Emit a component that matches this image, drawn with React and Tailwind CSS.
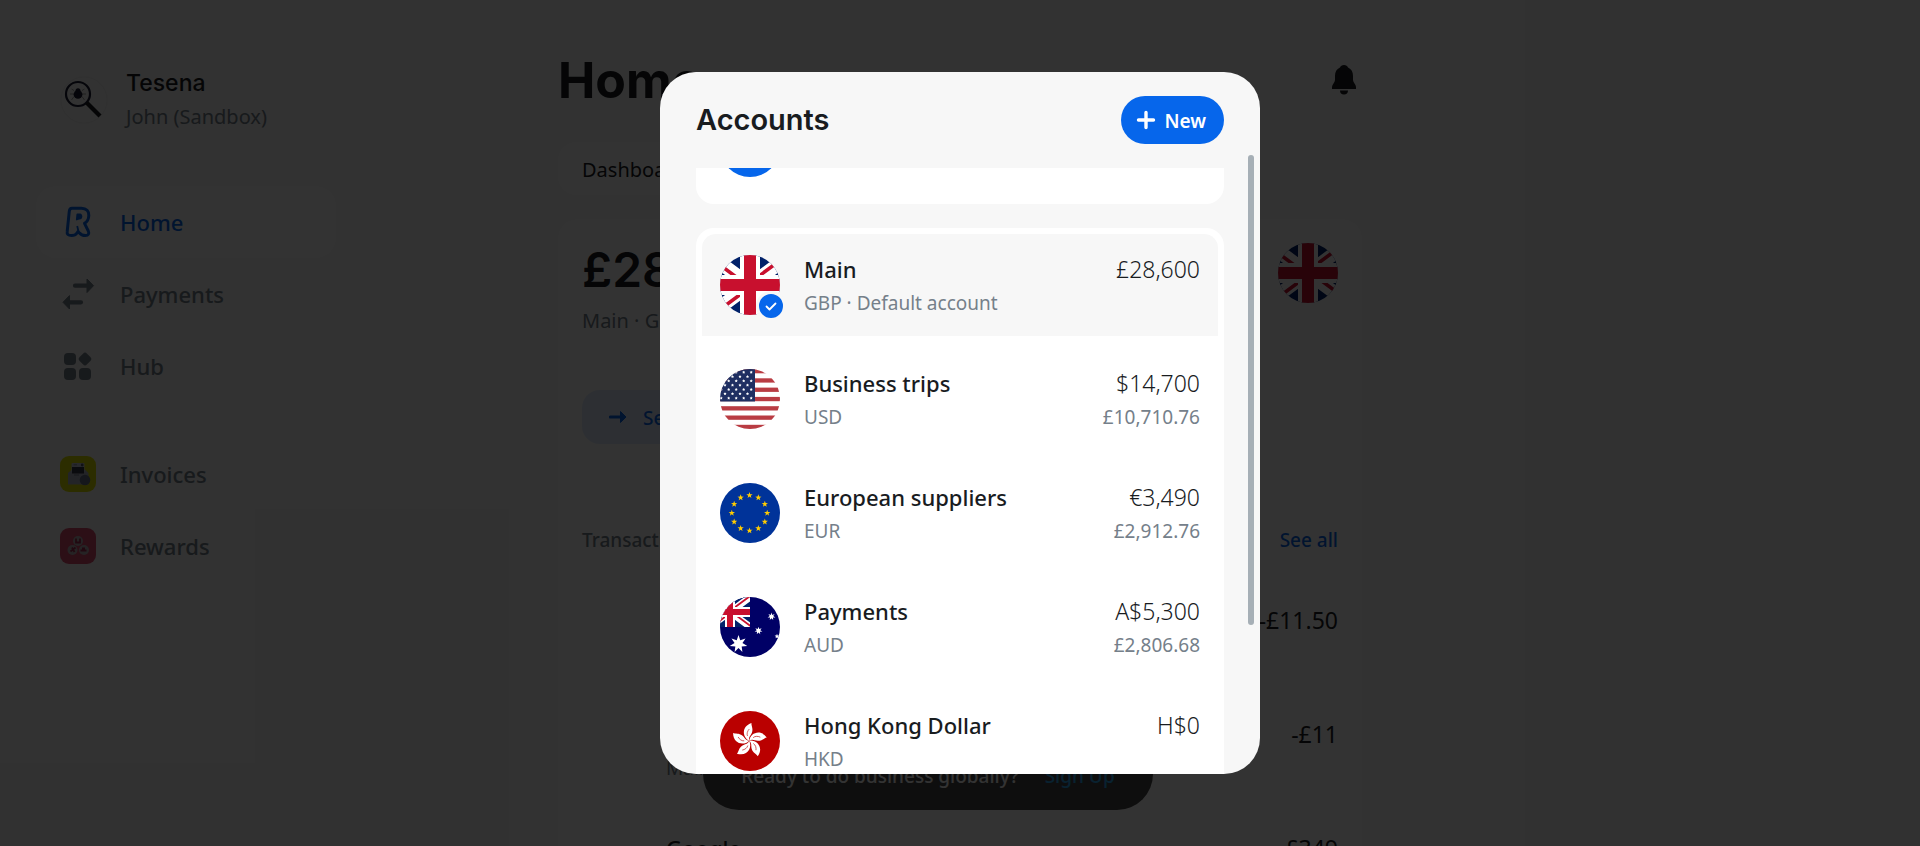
import React from "react";

function UnionJackArt() {
  return (
    <g>
      <rect x="-10" width="80" height="60" fill="#012169" />
      <path d="M-10 .4L70 59.6M70 .4L-10 59.6" stroke="#fff" strokeWidth="13.5" />
      <path
        d="M30 30L-10 .4V4.9L30 34.5ZM30 30L70 .4V-4.1L30 25.5ZM30 30L70 59.6V55.1L30 25.5ZM30 30L-10 59.6V64.1L30 34.5Z"
        fill="#c8102e"
      />
      <path d="M30 0V60M-10 30H70" stroke="#fff" strokeWidth="20" />
      <path d="M30 0V60M-10 30H70" stroke="#c8102e" strokeWidth="12" />
    </g>
  );
}

function star(cx, cy, r, points = 5, inner = 0.4) {
  const out = [];
  for (let i = 0; i < points * 2; i++) {
    const a = -Math.PI / 2 + (i * Math.PI) / points;
    const q = i % 2 ? r * inner : r;
    out.push(`${(cx + q * Math.cos(a)).toFixed(2)},${(cy + q * Math.sin(a)).toFixed(2)}`);
  }
  return out.join(" ");
}

function UsFlag() {
  const dots = [];
  for (let r = 0; r < 7; r++) {
    for (let c = 0; c < 5; c++) {
      dots.push([(r % 2 ? 5 : 1.2) + c * 7.5, 3.3 + r * 4.3]);
    }
  }
  return (
    <g>
      <rect width="60" height="60" fill="#fff" />
      {[0, 1, 2, 3, 4, 5, 6].map((i) => (
        <rect key={i} y={i * 9.3} width="60" height="4.3" fill="#b93c43" />
      ))}
      <rect width="35" height="32.5" fill="#1f2f62" />
      {dots.filter((d) => d[0] < 34).map((d, i) => (
        <polygon key={i} points={star(d[0], d[1], 1.6, 5, 0.55)} fill="#fff" />
      ))}
    </g>
  );
}

function EuFlag() {
  return (
    <g>
      <rect width="60" height="60" fill="#039" />
      {Array.from({ length: 12 }, (_, i) => (
        <polygon key={i} fill="#fc0" points={star(29.5 + 17.7 * Math.sin((i * Math.PI) / 6), 30 - 17.7 * Math.cos((i * Math.PI) / 6), 3.3)} />
      ))}
    </g>
  );
}

function AuFlag() {
  return (
    <g>
      <rect width="60" height="60" fill="#006" />
      <svg x="-10" y="0" width="40" height="30" viewBox="-10 0 80 60">
        <UnionJackArt />
      </svg>
      <polygon fill="#fff" points={star(18.5, 47, 9, 7, 0.45)} />
      <polygon fill="#fff" points={star(51.5, 19.5, 4, 7, 0.45)} />
      <polygon fill="#fff" points={star(38.5, 33.7, 4, 7, 0.45)} />
      <polygon fill="#fff" points={star(57, 39.3, 2.5, 5, 0.45)} />
    </g>
  );
}

function HkFlag() {
  return (
    <g>
      <rect width="60" height="60" fill="#ba0000" />
      {[0, 72, 144, 216, 288].map((a) => (
        <g key={a} transform={`rotate(${a} 29.2 29.7)`}>
          <path d="M29.200 29.700C22.500 26.500 21 15.500 31.500 12C31 14.500 33.500 17.500 32 21.500C31 24.500 28.200 26 29.200 29.700Z" fill="#fff" />
          <path d="M27.500 25C26.500 22.500 27.500 20 29.300 18" fill="none" stroke="#ba0000" strokeWidth=".6" />
        </g>
      ))}
    </g>
  );
}

const FLAGS = { GBP: UnionJackArt, USD: UsFlag, EUR: EuFlag, AUD: AuFlag, HKD: HkFlag };

function Flag({ code }) {
  const Art = FLAGS[code];
  return (
    <svg viewBox="0 0 60 60" className="size-[60px] shrink-0 rounded-full" aria-hidden="true">
      <Art />
    </svg>
  );
}

function AvatarIcon() {
  return (
    <svg viewBox="0 0 48 48" className="size-12 shrink-0" aria-hidden="true">
      <circle cx="24" cy="24" r="23" fill="#fbfbfb" stroke="#eee" />
      <circle cx="18" cy="18" r="12" fill="none" stroke="#191c33" strokeWidth="2.200" />
      <path d="M26.500 26.500L40 40" stroke="#191c1f" strokeWidth="4.200" />
      <path d="M14 14.500L11.500 13M14 18H10M14 20.500L11.500 24M22 14.500L24.500 13M22 18H26M22 20.500L24.500 24" stroke="#888" strokeWidth=".8" fill="none" />
      <ellipse cx="18" cy="18.500" rx="4.400" ry="4.300" fill="#191c33" />
      <circle cx="18" cy="14.700" r="2.500" fill="#191c33" />
    </svg>
  );
}

function HomeIcon() {
  return (
    <svg viewBox="0 0 36 36" className="size-9" fill="none" stroke="#0666eb" strokeWidth="3" strokeLinejoin="round" aria-hidden="true">
      <path d="M12 4.200H21.500C26.500 4.200 29 7.200 28.800 11.500C28.700 15 27 18 24.500 19.400L28.300 27C29.500 29.700 28.300 31.500 25.500 31.500C22.500 31.500 21 31 19.500 29L18 27.500L17 29C15.500 31.200 14.500 31.500 11.500 31.500C8 31.500 6.800 30.200 7.200 27.500L9.300 7.200C9.500 5.200 10.500 4.200 12 4.200Z" />
      <path d="M17.300 10.500H20C22 10.500 22 14.500 19.500 14.500L16.800 15.500ZM17.200 22L18.500 27.500" strokeWidth="1.800" fill="#0666eb" />
    </svg>
  );
}

function PaymentsIcon() {
  return (
    <svg viewBox="0 0 36 36" className="size-9" aria-hidden="true">
      <path d="M15 9.700H28M21 26.300H8" stroke="#75808a" strokeWidth="4.200" strokeLinecap="round" />
      <path d="M27 3L33.500 9.700L27 16.500ZM9.500 19.600L3 26.300L9.500 33Z" fill="#75808a" stroke="#75808a" strokeLinejoin="round" />
    </svg>
  );
}

function HubIcon() {
  return (
    <svg viewBox="0 0 36 36" className="size-9" fill="#75808a" aria-hidden="true">
      <rect x="4" y="5" width="12" height="12" rx="4" />
      <rect x="4" y="20" width="12" height="12" rx="4" />
      <rect x="19" y="20" width="12" height="12" rx="4" />
      <rect x="19.800" y="5.800" width="10.400" height="10.400" rx="2.500" transform="rotate(45 25 11)" />
    </svg>
  );
}

function InvoicesIcon() {
  return (
    <svg viewBox="0 0 36 36" className="size-9" aria-hidden="true">
      <rect width="36" height="36" rx="9" fill="#dde200" />
      <path d="M8 17L12 13.500H25L28.500 17V28.500H8Z" fill="#b0b5c2" />
      <rect x="11.500" y="7" width="13" height="9" rx="1" fill="#c9cdd8" />
      <path d="M13.500 8.800H17" stroke="#8a90a0" />
      <circle cx="22.200" cy="9" r="1.400" fill="#55596a" />
      <rect x="12" y="11" width="12" height="6.500" fill="#343947" />
      <path d="M14 19H19" stroke="#717889" />
      <circle cx="25" cy="24" r="5.300" fill="#6a748c" />
    </svg>
  );
}

function RewardsIcon() {
  return (
    <svg viewBox="0 0 36 36" className="size-9" aria-hidden="true">
      <rect width="36" height="36" rx="9" fill="#d94c70" />
      <g fill="#b9afb6">
        <circle cx="18" cy="13" r="5" />
        <circle cx="12.500" cy="22" r="5" />
        <circle cx="24" cy="22" r="5" />
      </g>
      <path d="M16 10.500V14.500H20V10.500M10.500 23.500L15.500 19.500M12 19.500L14.500 24M20.500 22.500H26.500M22 20.500H25" stroke="#a32b52" strokeWidth="1.800" fill="none" />
    </svg>
  );
}

function BellIcon() {
  return (
    <svg viewBox="0 0 24 30" className="h-[30px] w-6" fill="#191c1f" aria-hidden="true">
      <path d="M12 0C14 0 15.500 1 16 2.500C19.500 4 21 7 21 11V15C21 17.500 24 19.500 24 22V24H0V22C0 19.500 3 17.500 3 15V11C3 7 4.500 4 8 2.500C8.500 1 10 0 12 0ZM8 25.500H16C16 28 14.500 29.500 12 29.500S8 28 8 25.500Z" />
    </svg>
  );
}

const NAV = [
  { label: "Home", Icon: HomeIcon, active: true },
  { label: "Payments", Icon: PaymentsIcon },
  { label: "Hub", Icon: HubIcon },
];
const APPS = [
  { label: "Invoices", Icon: InvoicesIcon },
  { label: "Rewards", Icon: RewardsIcon },
];

function NavLink({ label, Icon, active }) {
  return (
    <a href="#" className={`flex h-[72px] items-center gap-6 rounded-[20px] px-6 text-[22px] font-medium ${active ? "bg-white text-[#0666eb]" : "text-[#75808a]"}`}>
      <Icon />
      <span>{label}</span>
    </a>
  );
}

function Sidebar() {
  return (
    <aside className="w-[372px] shrink-0 pt-[62px] pl-9">
      <div className="flex items-end gap-[18px] pl-6">
        <div className="pb-1.5"><AvatarIcon /></div>
        <div>
          <div className="font-['Inter',sans-serif] text-[23px] leading-[42px] font-medium text-[#191c1f]">Tesena</div>
          <div className="text-xl leading-[26px] text-[#75808a]">John (Sandbox)</div>
        </div>
      </div>
      <nav className="mt-14 w-[300px]">
        {NAV.map((item) => <NavLink key={item.label} {...item} />)}
        <div className="mt-9">
          {APPS.map((item) => <NavLink key={item.label} {...item} />)}
        </div>
      </nav>
    </aside>
  );
}

const TRANSACTIONS = [
  { name: "Amazon", note: "Main", amount: "-£11.50" },
  { name: "Uber", note: "Main", amount: "-£11" },
  { name: "Google", note: "Main", amount: "-£349" },
];

function Home() {
  return (
    <main className="w-[804px] shrink-0 pt-[47px]">
      <header className="flex items-center justify-between pr-1.5">
        <h1 className="font-['Inter',sans-serif] text-[50px] leading-[66px] font-bold text-[#191c1f]">Home</h1>
        <button type="button" aria-label="Notifications"><BellIcon /></button>
      </header>
      <div className="mt-[29px] flex">
        <button type="button" className="h-[53px] rounded-[18px] bg-white px-6 pt-0.5 text-xl text-[#191c1f]">Dashboard</button>
      </div>
      <section className="mt-6 rounded-t-[20px] bg-white px-6 pt-6">
        <div className="flex items-start justify-between">
          <div>
            <div className="font-['Inter',sans-serif] text-5xl leading-[54px] font-semibold text-[#191c1f]">£28,600</div>
            <div className="mt-2 text-xl leading-8 text-[#75808a]">Main · GBP</div>
          </div>
          <Flag code="GBP" />
        </div>
        <button type="button" className="mt-[53px] flex h-[54px] items-center gap-4 rounded-[18px] bg-[#e1ebff] px-[27px] text-[19px] font-medium text-[#0666eb]">
          <svg viewBox="0 0 18 14" className="h-3.5 w-[18px]" aria-hidden="true">
            <path d="M1.500 7H12" stroke="#0666eb" strokeWidth="3.200" strokeLinecap="round" />
            <path d="M11.500 1.500L17 7L11.500 12.500Z" fill="#0666eb" stroke="#0666eb" strokeLinejoin="round" />
          </svg>
          <span className="pt-0.5">Send</span>
        </button>
        <div className="mt-20 flex justify-between text-[19px] leading-8 font-medium">
          <h2 className="text-[#75808a]">Transactions</h2>
          <a href="#" className="text-[#0666eb]">See all</a>
        </div>
        <ul className="mt-[22px]">
          {TRANSACTIONS.map((t) => (
            <li key={t.name} className="flex h-[114px] justify-between py-6 pl-[84px]">
              <div>
                <div className="text-[22px] leading-9 font-medium text-[#191c1f]">{t.name}</div>
                <div className="text-[19px] leading-8 text-[#75808a]">{t.note}</div>
              </div>
              <div className="text-[23px] leading-9 text-[#191c1f]">{t.amount}</div>
            </li>
          ))}
        </ul>
      </section>
    </main>
  );
}

const ACCOUNTS = [
  { name: "Main", detail: "GBP · Default account", code: "GBP", amount: "£28,600", selected: true },
  { name: "Business trips", detail: "USD", code: "USD", amount: "$14,700", converted: "£10,710.76" },
  { name: "European suppliers", detail: "EUR", code: "EUR", amount: "€3,490", converted: "£2,912.76" },
  { name: "Payments", detail: "AUD", code: "AUD", amount: "A$5,300", converted: "£2,806.68" },
  { name: "Hong Kong Dollar", detail: "HKD", code: "HKD", amount: "H$0" },
];

function AccountRow({ account }) {
  return (
    <li>
      <button type="button" className={`flex h-[102px] w-full items-start gap-6 px-[18px] pt-[17px] text-left ${account.selected ? "rounded-t-[14px] bg-[#f7f7f7]" : ""}`}>
        <span className="relative mt-1 flex">
          <Flag code={account.code} />
          {account.selected && (
            <span className="absolute -right-1.5 -bottom-1.5 flex size-[30px] items-center justify-center rounded-full border-3 border-[#f7f7f7] bg-[#0666eb]">
              <svg viewBox="0 0 24 24" className="size-6" fill="none" stroke="#fff" strokeWidth="1.800" strokeLinecap="round" strokeLinejoin="round" aria-hidden="true">
                <path d="M7.500 12.500L10.500 15.500L16.500 9.500" />
              </svg>
            </span>
          )}
        </span>
        <span className="flex-1">
          <span className="block text-[22px] leading-9 font-medium text-[#191c1f]">{account.name}</span>
          <span className="block text-[19px] leading-8 text-[#75808a]">{account.detail}</span>
        </span>
        <span className="text-right">
          <span className="block text-[23px] leading-9 font-light text-[#191c1f]">{account.amount}</span>
          <span className="block text-[19px] leading-8 text-[#75808a]">{account.converted}</span>
        </span>
      </button>
    </li>
  );
}

function AccountsDialog() {
  return (
    <div role="dialog" aria-label="Accounts" className="relative flex max-h-[702px] w-[600px] flex-col overflow-hidden rounded-[36px] bg-[#f7f7f7]">
      <header className="flex shrink-0 items-center justify-between px-9 py-6">
        <h2 className="font-['Inter',sans-serif] text-[29px] leading-9 font-semibold text-[#191c1f]">Accounts</h2>
        <button type="button" className="flex h-12 items-center gap-2 rounded-full bg-[#0666eb] pr-[18px] pl-[15px] text-[19px] font-semibold text-white">
          <svg viewBox="0 0 20 20" className="size-5" stroke="#fff" strokeWidth="3.400" strokeLinecap="round" aria-hidden="true">
            <path d="M10 2.500V17.500M2.500 10H17.500" />
          </svg>
          <span className="pt-0.5">New</span>
        </button>
      </header>
      <div className="flex min-h-0 flex-col overflow-hidden px-9">
        <div className="flex h-9 shrink-0 overflow-hidden rounded-b-[18px] bg-white pl-6">
          <div className="-mt-[51px] size-[60px] rounded-full bg-[#0666eb]" />
        </div>
        <ul className="mt-6 flex shrink-0 flex-col gap-3 rounded-[18px] bg-white p-1.5">
          {ACCOUNTS.map((a) => <AccountRow key={a.name} account={a} />)}
        </ul>
      </div>
      <div className="absolute top-[83px] right-1.5 h-[470px] w-1.5 rounded-full bg-[#a6afb6]" />
    </div>
  );
}

export default function App() {
  return (
    <div className="relative h-screen overflow-hidden bg-[#f7f7f7] font-['Noto_Sans',sans-serif]">
      <div className="flex">
        <Sidebar />
        <div className="flex flex-1 pl-[186px]">
          <Home />
        </div>
      </div>
      <div className="absolute inset-x-0 bottom-9 flex justify-center pr-16">
        <div className="flex h-[72px] items-center gap-[26px] rounded-[36px] bg-[#464646] px-[38px] pt-1 text-[19px] font-medium text-white">
          Ready to do business globally?
          <a href="#" className="text-[#2fa8f0]">Sign Up</a>
        </div>
      </div>
      <div className="absolute inset-0 flex items-center justify-center bg-black/80">
        <AccountsDialog />
      </div>
    </div>
  );
}
